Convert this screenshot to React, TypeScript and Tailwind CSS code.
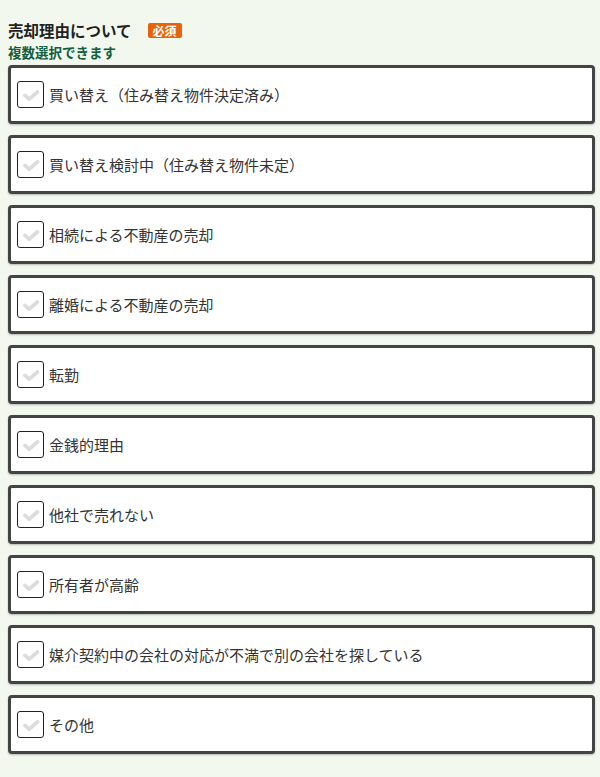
const reasons = [
  '買い替え（住み替え物件決定済み）',
  '買い替え検討中（住み替え物件未定）',
  '相続による不動産の売却',
  '離婚による不動産の売却',
  '転勤',
  '金銭的理由',
  '他社で売れない',
  '所有者が高齢',
  '媒介契約中の会社の対応が不満で別の会社を探している',
  'その他',
]

function CheckIcon() {
  return (
    <svg viewBox="0 0 24 24" className="h-[18px] w-[18px]" fill="none">
      <path d="M4 12.5l5.5 5L20.5 8" stroke="#dcdcdc" strokeWidth="5" strokeLinecap="round" strokeLinejoin="round" />
    </svg>
  )
}

export default function App() {
  return (
    <div className="min-h-[777px] w-full bg-[#f3f8ee] pl-2 pr-[5px] pt-[19px] font-['Noto_Sans_CJK_JP','Noto_Sans',sans-serif] text-[#333]">
      <div className="flex items-center gap-[16px]">
        <h2 className="text-[15.5px] font-bold leading-[22px] text-[#222]">売却理由について</h2>
        <span className="rounded-[2px] bg-[#e8620a] px-[5px] text-[12px] font-bold leading-[15px] text-white">必須</span>
      </div>
      <p className="mt-[1px] text-[13.5px] font-bold leading-[20px] text-[#12603f]">複数選択できます</p>

      <div className="mt-[3px] flex flex-col gap-[11px]">
        {reasons.map((r) => (
          <label
            key={r}
            className="flex h-[59px] items-center gap-[5px] rounded-[4px] border-[3px] border-[#444] bg-white pl-[6px] shadow-[0_1px_2px_rgba(0,0,0,0.25)]"
          >
            <span className="flex h-[27px] w-[27px] items-center justify-center rounded-[3px] border border-[#222] bg-white">
              <CheckIcon />
            </span>
            <span className="text-[15px] leading-[22px] text-[#333]">{r}</span>
          </label>
        ))}
      </div>
    </div>
  )
}
